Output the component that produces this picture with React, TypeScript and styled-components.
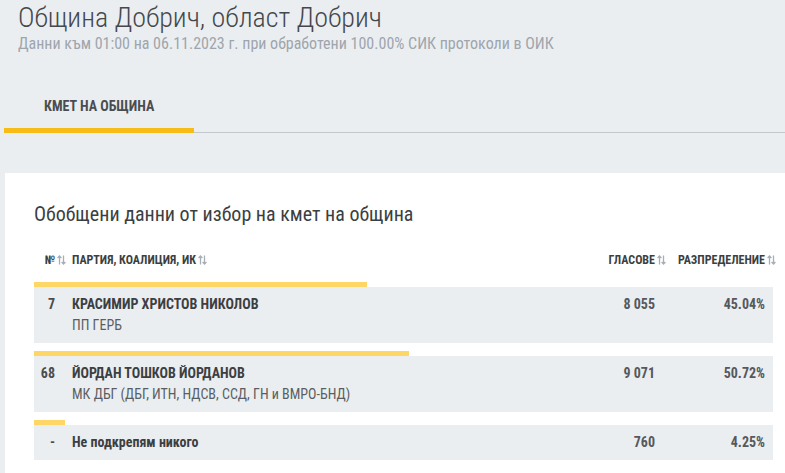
import styled, { createGlobalStyle } from "styled-components";

const GlobalStyle = createGlobalStyle`
  html, body {
    margin: 0;
    padding: 0;
    background: #ebeef1;
    font-family: "Roboto Condensed", Roboto, "Liberation Sans", sans-serif;
    color: #3c3f42;
    overflow: hidden;
  }
`;

type Row = {
  num: string;
  name: string;
  party?: string;
  votes: string;
  percent: number;
};

const rows: Row[] = [
  { num: "7", name: "КРАСИМИР ХРИСТОВ НИКОЛОВ", party: "ПП ГЕРБ", votes: "8 055", percent: 45.04 },
  {
    num: "68",
    name: "ЙОРДАН ТОШКОВ ЙОРДАНОВ",
    party: "МК ДБГ (ДБГ, ИТН, НДСВ, ССД, ГН и ВМРО-БНД)",
    votes: "9 071",
    percent: 50.72,
  },
  { num: "-", name: "Не подкрепям никого", votes: "760", percent: 4.25 },
];

const Page = styled.div`
  width: 785px;
  height: 473px;
  overflow: hidden;
`;

const Header = styled.div`
  padding: 2px 0 0 18px;
`;

const Title = styled.h1`
  margin: 0;
  font-size: 28px;
  line-height: 32px;
  font-weight: 300;
  color: #44484c;
`;

const Subtitle = styled.div`
  font-size: 16px;
  line-height: 20px;
  color: #9ea5ac;
`;

const Tabs = styled.div`
  display: flex;
  margin: 31px 0 0 4px;
  border-bottom: 1px solid #c4c8cc;
`;

const Tab = styled.div<{ $active?: boolean }>`
  width: 150px;
  padding: 13px 0 14px 40px;
  font-size: 14px;
  line-height: 16px;
  font-weight: 700;
  color: #4a4d50;
  border-bottom: 5px solid ${(p) => (p.$active ? "#f8bc16" : "transparent")};
  margin-bottom: -1px;
`;

const Card = styled.div`
  box-sizing: border-box;
  margin: 40px 0 0 5px;
  background: #fff;
  padding: 29px 12px 0 29px;
  height: 310px;
`;

const CardTitle = styled.h2`
  margin: 0 0 26px;
  font-size: 20px;
  line-height: 24px;
  font-weight: 400;
  color: #3c3f42;
`;

const Grid = styled.div`
  display: grid;
  grid-template-columns: 21px 1fr 90px 110px;
  padding-right: 8px;
`;

const HeadRow = styled(Grid)`
  font-size: 12px;
  font-weight: 700;
  color: #3c3f42;
  line-height: 16px;
  margin-bottom: 14px;
`;

const HeadCell = styled.div<{ $right?: boolean; $pad?: boolean }>`
  display: flex;
  align-items: center;
  justify-content: ${(p) => (p.$right ? "flex-end" : "flex-start")};
  padding-left: ${(p) => (p.$pad ? "17px" : "0")};
  white-space: nowrap;
`;

const SortIcon = styled.svg<{ $overhang?: boolean }>`
  width: 9px;
  height: 10px;
  margin-left: 2px;
  margin-right: ${(p) => (p.$overhang ? "-11px" : "0")};
  flex-shrink: 0;
`;

const Bar = styled.div`
  height: 5px;
  background: #fdd665;
`;

const Item = styled.div`
  margin-bottom: 8px;
`;

const Body = styled(Grid)`
  background: #ebeef1;
  padding-top: 7px;
  padding-bottom: 7px;
  font-size: 14px;
  line-height: 21px;
`;

const Num = styled.div`
  text-align: right;
  font-weight: 700;
  color: #4a4d50;
`;

const NameCell = styled.div`
  padding-left: 17px;
`;

const Name = styled.div`
  font-weight: 700;
  color: #3c3f42;
`;

const Party = styled.div`
  color: #5a5e62;
`;

const Value = styled.div`
  text-align: right;
  font-weight: 700;
  color: #55595d;
`;

const Sort = ({ overhang }: { overhang?: boolean }) => (
  <SortIcon $overhang={overhang} viewBox="0 0 9 10" fill="none" stroke="#a8aeb4" strokeWidth="1.3">
    <path d="M2.5 9.5V1M0.6 3L2.5 1L4.4 3" />
    <path d="M6.5 0.5V9M4.6 7L6.5 9L8.4 7" />
  </SortIcon>
);

export default function App() {
  return (
    <Page>
      <GlobalStyle />
      <Header>
        <Title>Община Добрич, област Добрич</Title>
        <Subtitle>Данни към 01:00 на 06.11.2023 г. при обработени 100.00% СИК протоколи в ОИК</Subtitle>
      </Header>
      <Tabs>
        <Tab $active>КМЕТ НА ОБЩИНА</Tab>
      </Tabs>
      <Card>
        <CardTitle>Обобщени данни от избор на кмет на община</CardTitle>
        <HeadRow>
          <HeadCell $right>
            №<Sort overhang />
          </HeadCell>
          <HeadCell $pad>
            ПАРТИЯ, КОАЛИЦИЯ, ИК<Sort />
          </HeadCell>
          <HeadCell $right>
            ГЛАСОВЕ<Sort overhang />
          </HeadCell>
          <HeadCell $right>
            РАЗПРЕДЕЛЕНИЕ<Sort overhang />
          </HeadCell>
        </HeadRow>
        {rows.map((r) => (
          <Item key={r.num}>
            <Bar style={{ width: `${r.percent}%` }} />
            <Body>
              <Num>{r.num}</Num>
              <NameCell>
                <Name>{r.name}</Name>
                {r.party && <Party>{r.party}</Party>}
              </NameCell>
              <Value>{r.votes}</Value>
              <Value>{r.percent.toFixed(2)}%</Value>
            </Body>
          </Item>
        ))}
      </Card>
    </Page>
  );
}
